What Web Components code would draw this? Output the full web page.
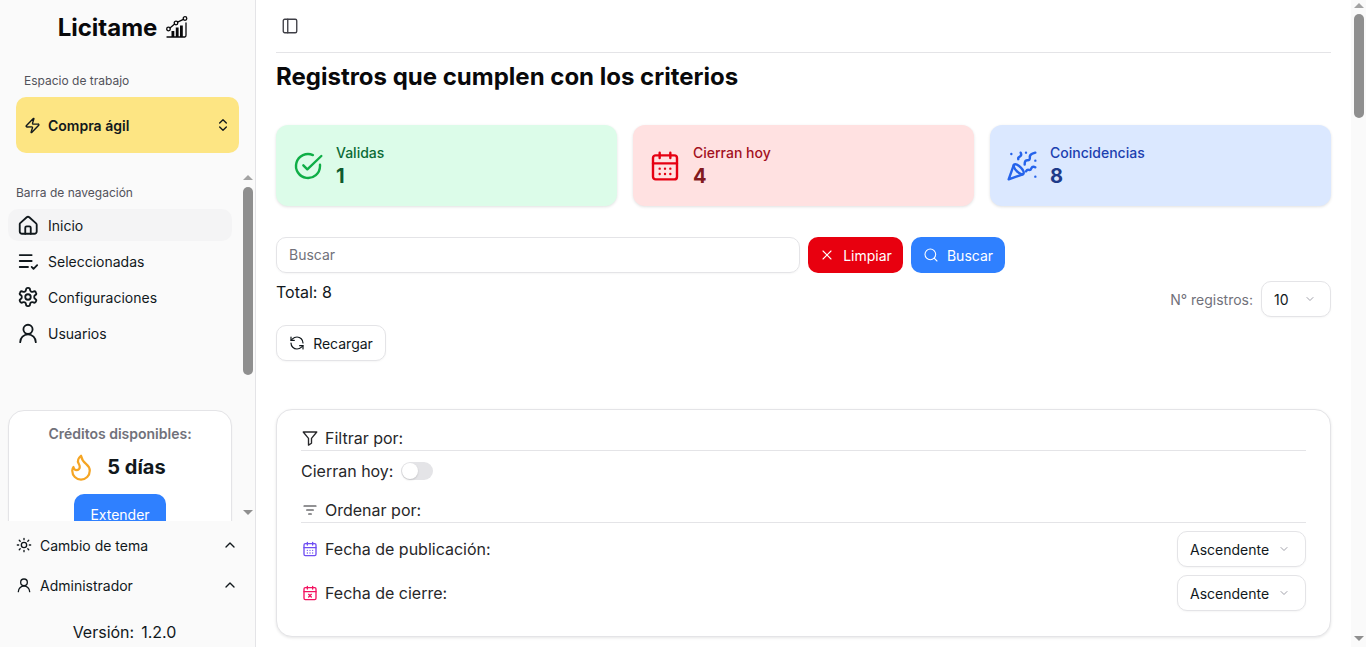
<!DOCTYPE html>
<html lang="es"><head><meta charset="utf-8"><title>Licitame</title>
<style>
html,body{margin:0;height:100%;overflow:hidden;background:#fff}
body{font-family:Inter,"Liberation Sans",sans-serif;color:#11181c}
</style></head><body>
<lic-app></lic-app>
<script>
const P={
home:'<path d="M3.2 10.2 10.6 3.6a2.2 2.2 0 0 1 2.8 0l7.4 6.6a2 2 0 0 1 .7 1.5V19a2.5 2.5 0 0 1-2.5 2.5h-13A2.5 2.5 0 0 1 3 19v-7.3a2 2 0 0 1 .2-1.5z"/><path d="M9 21.5V15a1.5 1.5 0 0 1 1.5-1.5h3A1.5 1.5 0 0 1 15 15v6.5"/>',
list:'<path d="M3 5.5h13M3 12h13M3 18.5h9" /><path d="m16 18.5 2 2 4-4"/>',
gear:'<path d="M12.2 2h-.4a2 2 0 0 0-2 2v.2a2 2 0 0 1-1 1.7l-.4.3a2 2 0 0 1-2 0l-.2-.1a2 2 0 0 0-2.7.7l-.2.4a2 2 0 0 0 .7 2.7l.2.1a2 2 0 0 1 1 1.7v.5a2 2 0 0 1-1 1.8l-.2.1a2 2 0 0 0-.7 2.7l.2.4a2 2 0 0 0 2.7.7l.2-.1a2 2 0 0 1 2 0l.4.3a2 2 0 0 1 1 1.7v.2a2 2 0 0 0 2 2h.4a2 2 0 0 0 2-2v-.2a2 2 0 0 1 1-1.7l.4-.3a2 2 0 0 1 2 0l.2.1a2 2 0 0 0 2.7-.7l.2-.4a2 2 0 0 0-.7-2.7l-.2-.1a2 2 0 0 1-1-1.8v-.5a2 2 0 0 1 1-1.7l.2-.1a2 2 0 0 0 .7-2.7l-.2-.4a2 2 0 0 0-2.7-.7l-.2.1a2 2 0 0 1-2 0l-.4-.3a2 2 0 0 1-1-1.7V4a2 2 0 0 0-2-2z"/><circle cx="12" cy="12" r="3"/>',
user:'<circle cx="12" cy="8" r="5"/><path d="M3.5 22a8.5 8.5 0 0 1 17 0"/>',
zap:'<path d="M4 14a1 1 0 0 1-.78-1.63l9.9-10.2a.5.5 0 0 1 .86.46l-1.92 6.02A1 1 0 0 0 13 10h7a1 1 0 0 1 .78 1.63l-9.9 10.2a.5.5 0 0 1-.86-.46l1.92-6.02A1 1 0 0 0 11 14z"/>',
updown:'<path d="m7 15 5 5 5-5M7 9l5-5 5 5"/>',
up:'<path d="m6 15 6-6 6 6"/>',
down:'<path d="m6 9 6 6 6-6"/>',
sun:'<circle cx="12" cy="12" r="4"/><path d="M12 2v2M12 20v2M4.9 4.9l1.4 1.4M17.7 17.7l1.4 1.4M2 12h2M20 12h2M6.3 17.7l-1.4 1.4M19.1 4.9l-1.4 1.4"/>',
flame:'<path d="M8.5 14.5A2.5 2.5 0 0 0 11 12c0-1.4-.5-2-1-3-1.1-2.1-.2-4.1 2-6 .5 2.5 2 4.9 4 6.5s3 3.5 3 5.5a7 7 0 1 1-14 0c0-1.2.4-2.3 1-3a2.5 2.5 0 0 0 2.5 2.5z"/>',
panel:'<rect width="18" height="18" x="3" y="3" rx="2"/><path d="M9 3v18"/>',
check:'<path d="M21 11.1V12a9 9 0 1 1-5.3-8.2"/><path d="m8.5 11.5 3 3L22 4.5"/>',
cal:'<rect x="3" y="4" width="18" height="18" rx="2"/><path d="M3 10h18M8 2v4M16 2v4M8 14h.01M12 14h.01M16 14h.01M8 18h.01M12 18h.01M16 18h.01"/>',
calx:'<rect x="3" y="4" width="18" height="18" rx="2"/><path d="M3 10h18M8 2v4M16 2v4M10 14l4 4M14 14l-4 4"/>',
party:'<path d="M5.8 11.3 2 22l10.7-3.8"/><path d="M4 3h.01M22 8h.01M15 2h.01M22 20h.01"/><path d="m22 2-2.2.7a2.9 2.9 0 0 0-1.9 3.3c.1.9-.6 1.7-1.5 1.7h-.4c-.9 0-1.7.8-1.9 1.7L14 11"/><path d="m22 13-.8-.3c-.9-.3-1.8.2-2.2 1-.3.9-1.1 1.4-2 1.2-.9-.2-1.6.4-2 1.1"/><path d="m11 2 .3.8c.3.9-.2 1.8-1 2.2-.8.3-1.3 1-1.1 1.9"/><path d="M11 13c1.9 1.9 2.8 4.1 2 4.9-.8.8-3 0-4.9-2-1.9-1.9-2.8-4.1-2-4.9.8-.8 3 0 4.9 2z"/>',
x:'<path d="M18 6 6 18M6 6l12 12"/>',
search:'<circle cx="11" cy="11" r="8"/><path d="m21 21-4.3-4.3"/>',
refresh:'<path d="M21 12a9 9 0 0 0-9-9 9.75 9.75 0 0 0-6.74 2.74L3 8"/><path d="M3 3v5h5"/><path d="M3 12a9 9 0 0 0 9 9 9.75 9.75 0 0 0 6.74-2.74L21 16"/><path d="M16 16h5v5"/>',
funnel:'<path d="M3 4h18l-7 8.5V19l-4 2.5v-9z"/>',
sort:'<path d="M3 6h18M7 12h10M10 18h4"/>',
logo:'<circle cx="20" cy="3.5" r="1.8"/><circle cx="11" cy="8" r="1.8"/><circle cx="3.5" cy="14" r="1.8"/><path d="M18.4 4.3 12.6 7.2M9.6 9.1 5 12.9"/><path fill="currentColor" stroke="none" d="M6.5 16h2.8v6H6.5zM10.8 12.5h2.8V22h-2.8zM15 10.5h2.8V22H15z"/><path d="M2 22h18a2 2 0 0 0 1-2V8"/>'
};
function def(name,css,html,extra){
 customElements.define(name,class extends HTMLElement{
  constructor(){super();const r=this.attachShadow({mode:'open'});r.innerHTML='<style>'+css+'</style>'+(typeof html==='function'?html(this):html);}
  connectedCallback(){if(extra)extra(this)}
 });
}
customElements.define('lic-icon',class extends HTMLElement{
 connectedCallback(){
  const s=this.getAttribute('size')||16,w=this.getAttribute('sw')||2;
  if(!this.shadowRoot){const r=this.attachShadow({mode:'open'});
  r.innerHTML='<style>:host{display:inline-flex;flex:none;width:'+s+'px;height:'+s+'px}svg{width:100%;height:100%;display:block}</style><svg viewBox="0 0 24 24" fill="none" stroke="currentColor" stroke-width="'+w+'" stroke-linecap="round" stroke-linejoin="round">'+P[this.getAttribute('name')]+'</svg>';}
 }
});
customElements.define('lic-nav-item',class extends HTMLElement{
 constructor(){super();const r=this.attachShadow({mode:'open'});
 r.innerHTML='<style>:host{display:flex;align-items:center;height:32px;gap:9px;padding:0 9px;border-radius:10px;font-size:14px;color:#11181c}:host([active]){background:#f4f4f5}</style><slot name="i"></slot><slot></slot>';}
});
customElements.define('lic-stat',class extends HTMLElement{
 constructor(){super();const r=this.attachShadow({mode:'open'});
 r.innerHTML=`<style>:host{display:flex;flex:1;min-width:0;align-items:center;gap:12px;height:81px;box-sizing:border-box;padding:0 16px;border-radius:12px;background:var(--bg);box-shadow:0 1px 3px rgba(0,0,0,.12)}
 .t{font-size:14px;font-weight:500;line-height:20px;color:var(--tc)}.v{font-size:20px;font-weight:700;line-height:26px;color:var(--vc)}
 .c{display:flex;flex-direction:column}</style><slot name="i"></slot><div class="c"><div class="t">${this.getAttribute('label')}</div><div class="v">${this.getAttribute('value')}</div></div>`;}
});
customElements.define('lic-btn',class extends HTMLElement{
 constructor(){super();const r=this.attachShadow({mode:'open'});
 r.innerHTML=`<style>:host{display:inline-flex;align-items:center;justify-content:center;gap:8px;height:36px;box-sizing:border-box;padding:0 12px;border-radius:10px;font-size:14px;background:var(--b,#fff);color:var(--f,#11181c)}
 :host([outline]){border:1px solid #e4e4e7;box-shadow:0 1px 2px rgba(0,0,0,.04)}</style><slot></slot>`;}
});
customElements.define('lic-select',class extends HTMLElement{
 constructor(){super();const r=this.attachShadow({mode:'open'});
 r.innerHTML=`<style>:host{display:flex;align-items:center;justify-content:space-between;height:36px;box-sizing:border-box;padding:0 15px 0 12px;border:1px solid #e4e4e7;border-radius:10px;font-size:14px;background:#fff;color:#11181c;box-shadow:0 1px 2px rgba(0,0,0,.04)}
 .d{color:#a1a1aa;display:flex}</style><slot></slot><span class="d"><lic-icon name="down" size="12" sw="2"></lic-icon></span>`;}
});
customElements.define('lic-scrollbar',class extends HTMLElement{
 constructor(){super();const r=this.attachShadow({mode:'open'});
 const top=this.getAttribute('top'),h=this.getAttribute('thumb'),bg=this.getAttribute('bg')||'#fafafa';
 r.innerHTML=`<style>:host{display:block;position:relative;width:15px;flex:none;background:${bg}}
 .a{position:absolute;left:3px;width:0;height:0;border-left:5px solid transparent;border-right:5px solid transparent}
 .u{top:3px;border-bottom:5px solid #a3a3a3}.n{bottom:6px;border-top:5px solid #8f8f8f}
 .t{position:absolute;left:3px;width:10px;top:${top}px;height:${h}px;border-radius:5px;background:#8f8f8f}</style>
 <div class="a u"></div><div class="t"></div><div class="a n"></div>`;}
});
customElements.define('lic-sidebar',class extends HTMLElement{
 constructor(){super();const r=this.attachShadow({mode:'open'});
 r.innerHTML=`<style>
 :host{display:flex;flex-direction:column;width:256px;flex:none;box-sizing:border-box;background:#fafafa;border-right:1px solid #e4e4e7;height:647px;overflow:hidden}
 .logo{display:flex;align-items:center;justify-content:center;gap:8px;height:36px;margin-top:9px;padding-right:8px;font-size:24px;font-weight:700;color:#09090b}
 .wl{font-size:12px;line-height:16px;color:#52525b;margin:28px 0 0 24px}
 .ws{display:flex;align-items:center;margin:8px 16px 0;height:56px;background:#fde583;border-radius:10px;padding:0 8px;font-size:14px;font-weight:600;color:#11181c;gap:7px;width:223px;box-sizing:border-box}
 .ws span{flex:1}
 .mid{display:flex;height:349px;margin-top:19px;overflow:hidden}
 .scroll{width:240px;flex:none;overflow:hidden;box-sizing:border-box}
 .nl{font-size:12px;line-height:16px;color:#52525b;margin:13px 0 0 16px}
 nav{display:flex;flex-direction:column;gap:4px;margin:8px 8px 0}
 .card{margin:61px 0 0 8px;width:224px;box-sizing:border-box;background:#fff;border:1px solid #e4e4e7;border-radius:16px;padding:14px 0 0;height:140px;display:flex;flex-direction:column;align-items:center;box-shadow:0 1px 2px rgba(0,0,0,.05)}
 .cl{font-size:14px;font-weight:600;line-height:17px;color:#71717a}
 .d{display:flex;align-items:center;gap:11px;margin-top:7px;height:36px;font-size:20px;font-weight:700;color:#11181c;padding-right:8px;box-sizing:border-box}
 .flame{color:#f5a524;display:flex}
 .ext{margin-top:9px;width:92px;height:40px;background:#2f80ff;border-radius:10px;color:#fff;font-size:14px;display:flex;align-items:center;justify-content:center}
 .foot{flex:1;display:flex;flex-direction:column;padding:0 16px}
 .fr{display:flex;align-items:center;gap:8px;font-size:14px;height:40px;color:#11181c;padding-right:1px;margin-right:0}
 .fr span{flex:1}
 .fr:first-child{margin-top:4px}
 .ver{display:flex;justify-content:center;gap:7px;font-size:16px;line-height:20px;margin-top:17px;color:#11181c;padding-right:6px}
 </style>
 <div class="logo">Licitame<lic-icon name="logo" size="24" sw="1.3"></lic-icon></div>
 <div class="wl">Espacio de trabajo</div>
 <div class="ws"><lic-icon name="zap" size="17"></lic-icon><span>Compra ágil</span><lic-icon name="updown" size="16"></lic-icon></div>
 <div class="mid"><div class="scroll">
  <div class="nl">Barra de navegación</div>
  <nav>
   <lic-nav-item active><lic-icon slot="i" name="home" size="22"></lic-icon>Inicio</lic-nav-item>
   <lic-nav-item><lic-icon slot="i" name="list" size="22"></lic-icon>Seleccionadas</lic-nav-item>
   <lic-nav-item><lic-icon slot="i" name="gear" size="22"></lic-icon>Configuraciones</lic-nav-item>
   <lic-nav-item><lic-icon slot="i" name="user" size="22"></lic-icon>Usuarios</lic-nav-item>
  </nav>
  <div class="card"><div class="cl">Créditos disponibles:</div>
   <div class="d"><span class="flame"><lic-icon name="flame" size="30" sw="1.8"></lic-icon></span>5 días</div>
   <div class="ext">Extender</div></div>
 </div><lic-scrollbar top="15" thumb="188"></lic-scrollbar></div>
 <div class="foot">
  <div class="fr"><lic-icon name="sun" size="16"></lic-icon><span>Cambio de tema</span><lic-icon name="up" size="16"></lic-icon></div>
  <div class="fr"><lic-icon name="user" size="16"></lic-icon><span>Administrador</span><lic-icon name="up" size="16"></lic-icon></div>
  <div class="ver"><span>Versión:</span><span>1.2.0</span></div>
 </div>`;}
});
customElements.define('lic-filters',class extends HTMLElement{
 constructor(){super();const r=this.attachShadow({mode:'open'});
 r.innerHTML=`<style>
 :host{display:block;box-sizing:border-box;height:228px;border:1px solid #e4e4e7;border-radius:16px;padding:16px 24px;background:#fff;box-shadow:0 1px 3px rgba(0,0,0,.1);font-size:16px;color:#27272a}
 .h{display:flex;align-items:center;gap:6px;height:24px;border-bottom:1px solid #e4e4e7;padding-bottom:0}
 .h lic-icon{margin-right:0}
 .ic{width:18px;display:flex;justify-content:center}
 .tg{display:flex;align-items:center;gap:8px;height:24px;margin-top:8px}
 .sw{width:32px;height:18px;border-radius:9px;background:#e4e4e7;position:relative}
 .sw i{position:absolute;left:1px;top:1px;width:16px;height:16px;border-radius:50%;background:#fff;box-shadow:0 1px 2px rgba(0,0,0,.15)}
 .row{display:flex;align-items:center;justify-content:space-between;height:36px;margin-top:8px}
 .row>div{display:flex;align-items:center;gap:6px}
 lic-select{width:129px;box-sizing:border-box}
 </style>
 <div class="h"><span class="ic"><lic-icon name="funnel" size="18" sw="1.8"></lic-icon></span>Filtrar por:</div>
 <div class="tg">Cierran hoy:<span class="sw"><i></i></span></div>
 <div class="h" style="margin-top:15px"><span class="ic"><lic-icon name="sort" size="16" sw="1.8"></lic-icon></span>Ordenar por:</div>
 <div class="row"><div><span class="ic" style="color:#6f4ef2"><lic-icon name="cal" size="16"></lic-icon></span>Fecha de publicación:</div><lic-select>Ascendente</lic-select></div>
 <div class="row"><div><span class="ic" style="color:#f31260"><lic-icon name="calx" size="16"></lic-icon></span>Fecha de cierre:</div><lic-select>Ascendente</lic-select></div>`;}
});
customElements.define('lic-main',class extends HTMLElement{
 constructor(){super();const r=this.attachShadow({mode:'open'});
 r.innerHTML=`<style>
 :host{display:flex;flex:1;min-width:0;height:647px;overflow:hidden;background:#fff}
 .c{flex:1;min-width:0;box-sizing:border-box;padding:0 20px;overflow:hidden}
 .top{height:52px;border-bottom:1px solid #e4e4e7;display:flex;align-items:center;padding-left:5px;box-sizing:content-box;color:#3f3f46;padding-bottom:0}
 h1{font-size:24px;font-weight:700;line-height:32px;margin:8px 0 0;color:#09090b}
 .stats{display:flex;gap:16px;margin-top:32px}
 .search{display:flex;gap:8px;margin-top:31px}
 .inp{width:524px;height:36px;box-sizing:border-box;border:1px solid #e4e4e7;border-radius:10px;padding:0 12px;font-size:14px;line-height:34px;color:#71717a;box-shadow:0 1px 2px rgba(0,0,0,.04)}
 .tot{display:flex;justify-content:space-between;margin-top:8px;height:36px}
 .tl{font-size:16px;line-height:22px;color:#11181c}
 .tr{display:flex;align-items:center;gap:8px;font-size:14px;color:#71717a}
 .tr lic-select{width:70px;padding-right:14px}
 .rel{margin-top:8px}
 lic-filters{margin-top:48px}
 </style>
 <div class="c">
 <div class="top"><lic-icon name="panel" size="18" sw="1.8"></lic-icon></div>
 <h1>Registros que cumplen con los criterios</h1>
 <div class="stats">
  <lic-stat label="Validas" value="1" style="--bg:#dcfce9;--tc:#0b6b35;--vc:#0e5a2e"><span slot="i" style="color:#0fae47;display:flex"><lic-icon name="check" size="32" sw="1.8"></lic-icon></span></lic-stat>
  <lic-stat label="Cierran hoy" value="4" style="--bg:#ffe1e1;--tc:#a3111e;--vc:#821a1f"><span slot="i" style="color:#e60012;display:flex"><lic-icon name="cal" size="32" sw="1.8"></lic-icon></span></lic-stat>
  <lic-stat label="Coincidencias" value="8" style="--bg:#dbe8ff;--tc:#1c40b0;--vc:#1e3a8a"><span slot="i" style="color:#2563eb;display:flex"><lic-icon name="party" size="32" sw="1.8"></lic-icon></span></lic-stat>
 </div>
 <div class="search"><div class="inp">Buscar</div>
  <lic-btn style="--b:#e8000f;--f:#fff;width:95px"><lic-icon name="x" size="16" sw="1.6"></lic-icon>Limpiar</lic-btn>
  <lic-btn style="--b:#2f80ff;--f:#fff;width:94px"><lic-icon name="search" size="16" sw="1.6"></lic-icon>Buscar</lic-btn></div>
 <div class="tot"><div class="tl">Total: 8</div><div class="tr">N° registros:<lic-select>10</lic-select></div></div>
 <div class="rel"><lic-btn outline style="width:110px"><lic-icon name="refresh" size="16" sw="1.8"></lic-icon>Recargar</lic-btn></div>
 <lic-filters></lic-filters>
 </div>
 <lic-scrollbar top="14" thumb="104"></lic-scrollbar>`;}
});
customElements.define('lic-app',class extends HTMLElement{
 constructor(){super();const r=this.attachShadow({mode:'open'});
 r.innerHTML='<style>:host{display:flex;width:1366px;height:647px;overflow:hidden}</style><lic-sidebar></lic-sidebar><lic-main></lic-main>';}
});
</script>
</body></html>
